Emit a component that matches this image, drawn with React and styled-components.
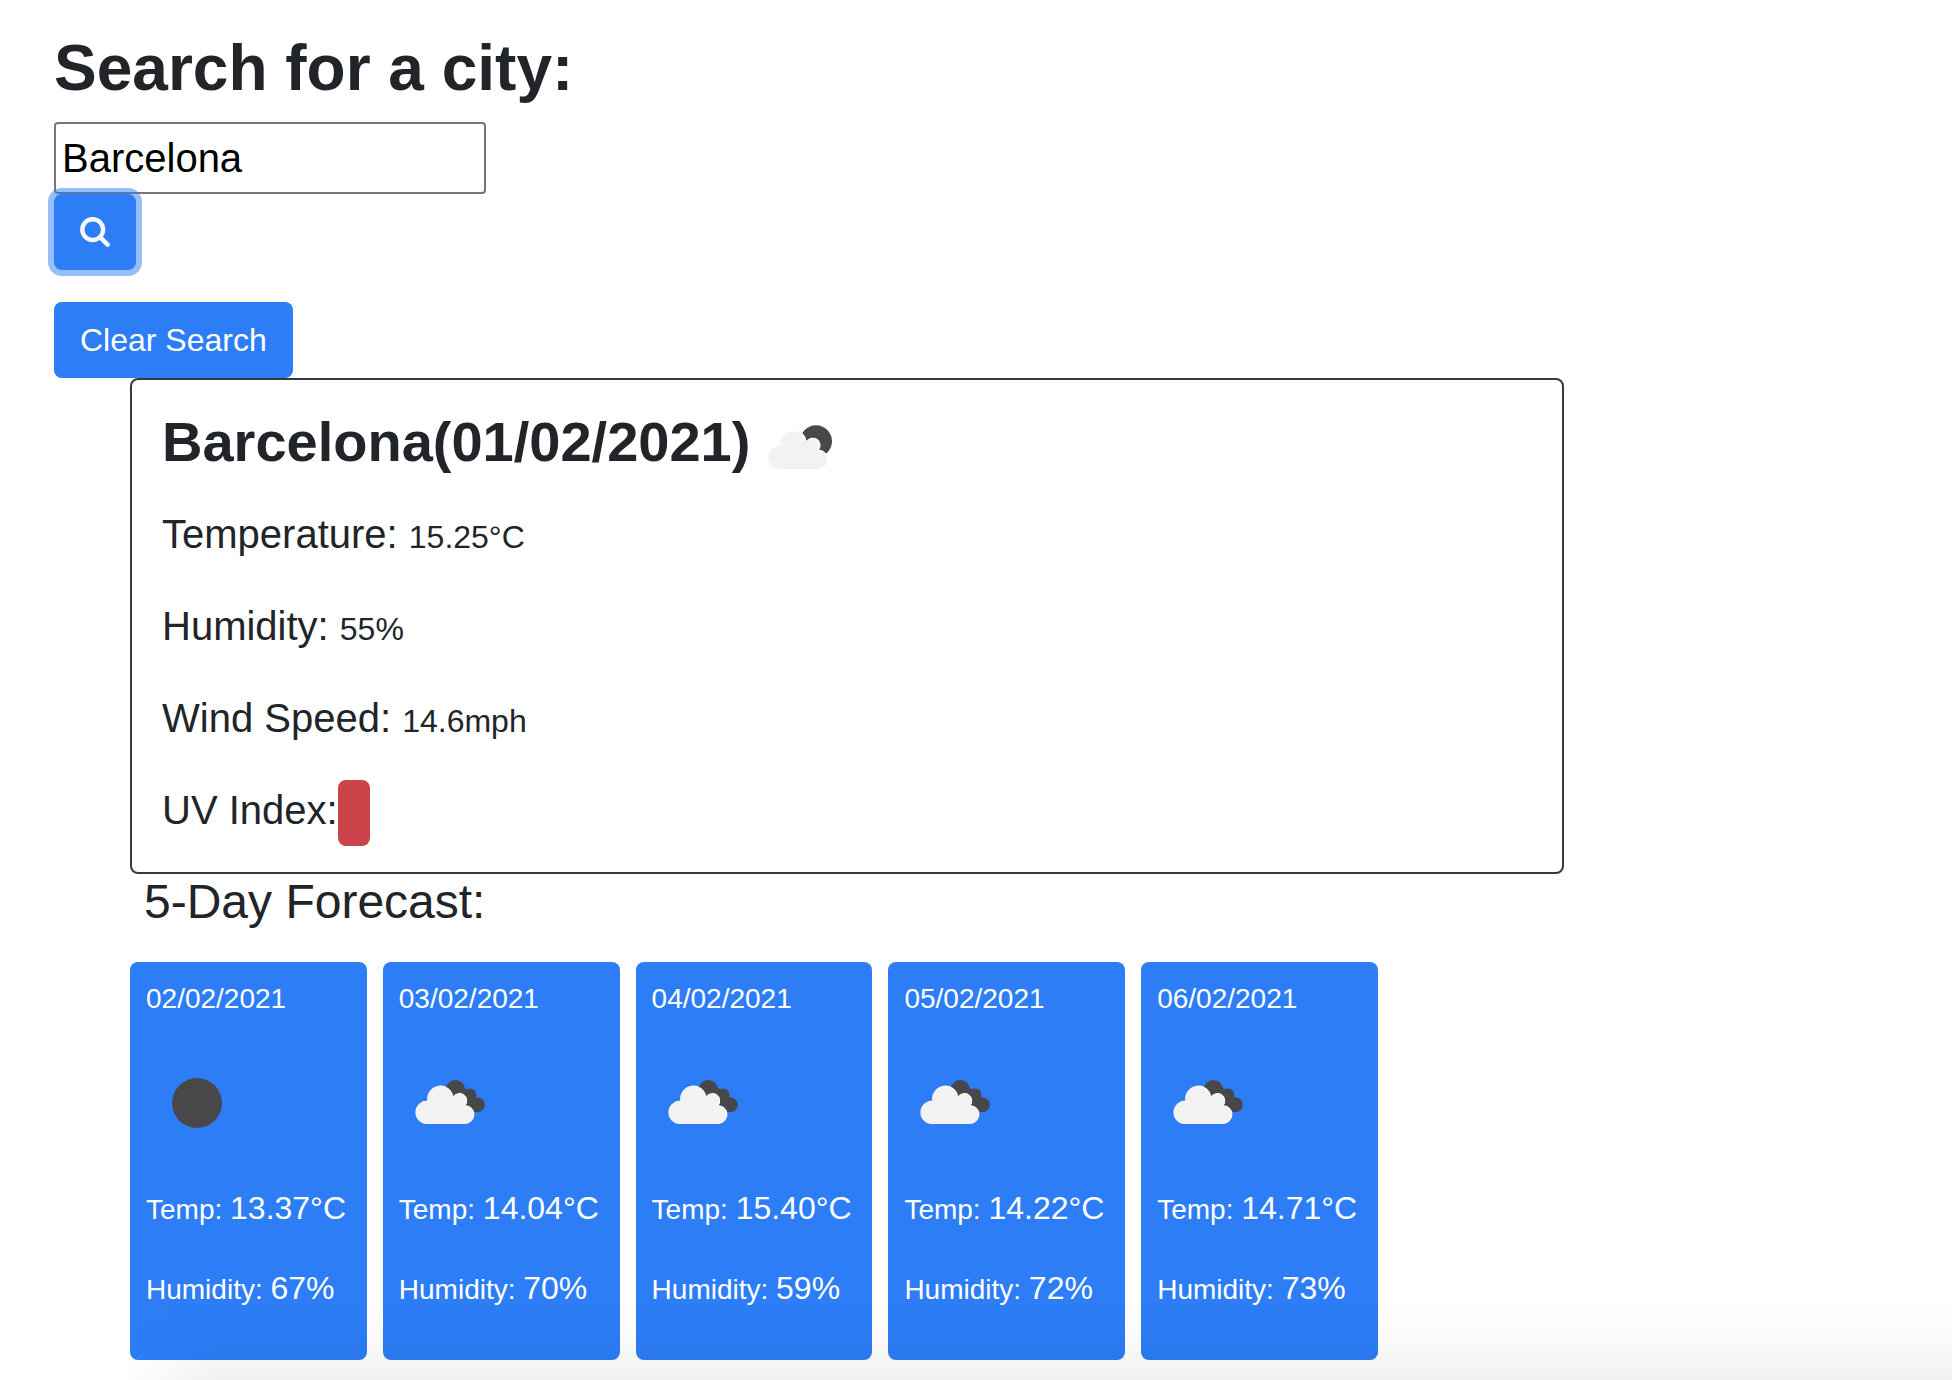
import React, { useState } from "react";
import styled, { createGlobalStyle } from "styled-components";

const GlobalStyle = createGlobalStyle`
  *, *::before, *::after { box-sizing: border-box; }
  body {
    margin: 0;
    background: #fff;
    color: #212529;
    font-family: "Liberation Sans", Arial, sans-serif;
    font-size: 32px;
    line-height: 48px;
  }
`;

const Page = styled.main`
  padding: 30px 20px 20px;
`;

const SearchForm = styled.form`
  display: flex;
  flex-direction: column;
  align-items: flex-start;
  margin-left: 34px;
`;

const SearchTitle = styled.label`
  margin-bottom: 16px;
  font-size: 64px;
  font-weight: 700;
  line-height: 76px;
`;

const CityInput = styled.input`
  width: 432px;
  max-width: 100%;
  height: 72px;
  padding: 2px 6px;
  border: 2px solid #767676;
  border-radius: 4px;
  background: #fff;
  color: #000;
  font: inherit;
  font-size: 40px;
`;

const Button = styled.button`
  display: inline-flex;
  align-items: center;
  height: 76px;
  padding: 0 26px;
  border: 0;
  border-radius: 8px;
  background: #2d7df6;
  color: #fff;
  font: inherit;
  cursor: pointer;
  box-shadow: ${(p) => (p.$active ? "0 0 0 6px rgba(45, 125, 246, 0.5)" : "none")};
`;

const ClearButton = styled(Button)`
  margin-top: 32px;
`;

const Results = styled.div`
  margin-left: 110px;
`;

const CurrentCard = styled.section`
  width: calc((100% + 110px) * 0.75);
  padding: 16px 30px 0;
  border: 2px solid #343a40;
  border-radius: 8px;
`;

const CityTitle = styled.h1`
  margin: 0 0 8px;
  font-size: 56px;
  font-weight: 700;
  line-height: 68px;
`;

const Stat = styled.div`
  display: flex;
  align-items: baseline;
  height: 60px;
  margin-bottom: 32px;
  font-size: 40px;
  line-height: 60px;
  white-space: pre;
`;

const StatValue = styled.span`
  font-size: 32px;
`;

const UvBadge = styled.span`
  align-self: flex-start;
  width: 32px;
  height: 66px;
  border-radius: 8px;
  background: #cb444a;
`;

const ForecastTitle = styled.h2`
  margin: 0 0 32px;
  padding-left: 14px;
  font-size: 48px;
  font-weight: 400;
  line-height: 56px;
`;

const Days = styled.div`
  display: grid;
  grid-template-columns: repeat(5, minmax(0, 1fr));
  gap: 16px;
  max-width: 1248px;
`;

const DayCard = styled.article`
  padding: 16px;
  border-radius: 8px;
  background: #2d7df6;
  color: #fff;
  white-space: nowrap;
`;

const DayDate = styled.h3`
  margin: 0 0 32px;
  font-size: 28px;
  font-weight: 400;
  line-height: 42px;
`;

const DayStat = styled.p`
  margin: 32px 0;
`;

const DayLabel = styled.span`
  font-size: 28px;
  line-height: 40px;
`;

const Icon = styled.svg`
  display: ${(p) => (p.$inline ? "inline-block" : "block")};
  width: 100px;
  height: 100px;
  vertical-align: middle;
`;

const BottomShade = styled.div`
  position: fixed;
  inset: auto 0 0 0;
  height: 80px;
  pointer-events: none;
  background: linear-gradient(
    to bottom,
    transparent,
    rgba(0, 0, 0, 0.012) 40%,
    rgba(0, 0, 0, 0.035) 72%,
    rgba(0, 0, 0, 0.06)
  );
  mask-image: linear-gradient(to right, transparent 120px, #000 220px);
`;

function SearchIcon() {
  return (
    <svg width="30" height="30" viewBox="0 0 30 30" fill="none" stroke="#f8f9fa" strokeLinecap="round" aria-hidden="true">
      <circle cx="12.7" cy="12.6" r="10.4" strokeWidth="4.4" />
      <path d="M20.4 20.4 L27.6 27.6" strokeWidth="4.4" />
    </svg>
  );
}

function CloudShape(props) {
  return (
    <path
      d="M27.3 70.9 A11.4 11.4 0 0 1 28.3 48.1 A12.8 12.8 0 1 1 53.6 43.9 A7.6 7.6 0 0 1 66.2 52.8 A9.1 9.1 0 0 1 67 70.9 Z"
      {...props}
    />
  );
}

function WeatherIcon({ kind, label, inline }) {
  return (
    <Icon viewBox={inline ? "-2 -2 100 100" : "0 -1 100 100"} role="img" aria-label={label} $inline={inline}>
      {kind === "clear" && <circle cx="51" cy="50" r="25" fill="#48484a" />}
      {kind === "few" && (
        <>
          <circle cx="64" cy="43.3" r="16" fill="#48484a" />
          <CloudShape fill="#fff" transform="translate(1 -1)" />
          <rect x="66" y="57" width="14" height="4" fill="#fff" />
          <CloudShape fill="#f2f2f2" />
        </>
      )}
      {kind === "broken" && (
        <>
          <g fill="#48484a">
            <circle cx="56.3" cy="36.5" r="9.6" />
            <circle cx="71" cy="41.8" r="6.4" />
            <circle cx="78.4" cy="51.7" r="7.4" />
            <path d="M48 42 L65 35 L71 37 L77 44 L80 52 L78.4 59.1 L66 59 Z" />
          </g>
          <CloudShape fill="#fff" transform="translate(0.6 -0.6)" />
          <CloudShape fill="#f2f2f2" />
        </>
      )}
    </Icon>
  );
}

const days = [
  { date: "02/02/2021", kind: "clear", label: "Clear sky", temp: "13.37", humidity: 67 },
  { date: "03/02/2021", kind: "broken", label: "Broken clouds", temp: "14.04", humidity: 70 },
  { date: "04/02/2021", kind: "broken", label: "Broken clouds", temp: "15.40", humidity: 59 },
  { date: "05/02/2021", kind: "broken", label: "Broken clouds", temp: "14.22", humidity: 72 },
  { date: "06/02/2021", kind: "broken", label: "Broken clouds", temp: "14.71", humidity: 73 },
];

export default function App() {
  const [city, setCity] = useState("Barcelona");
  return (
    <>
      <GlobalStyle />
      <Page>
        <SearchForm onSubmit={(e) => e.preventDefault()}>
          <SearchTitle htmlFor="city">Search for a city:</SearchTitle>
          <CityInput id="city" type="text" value={city} onChange={(e) => setCity(e.target.value)} />
          <Button type="submit" aria-label="Search" $active>
            <SearchIcon />
          </Button>
          <ClearButton type="button" onClick={() => setCity("")}>
            Clear Search
          </ClearButton>
        </SearchForm>
        <Results>
          <CurrentCard>
            <CityTitle>
              Barcelona(01/02/2021)
              <WeatherIcon kind="few" label="Few clouds" inline />
            </CityTitle>
            <Stat>
              Temperature: <StatValue>15.25°C</StatValue>
            </Stat>
            <Stat>
              Humidity: <StatValue>55%</StatValue>
            </Stat>
            <Stat>
              Wind Speed: <StatValue>14.6mph</StatValue>
            </Stat>
            <Stat>
              UV Index:
              <UvBadge role="img" aria-label="High" />
            </Stat>
          </CurrentCard>
          <ForecastTitle>5-Day Forecast:</ForecastTitle>
          <Days>
            {days.map((d) => (
              <DayCard key={d.date}>
                <DayDate>{d.date}</DayDate>
                <WeatherIcon kind={d.kind} label={d.label} />
                <DayStat>
                  <DayLabel>Temp: </DayLabel>
                  {d.temp}°C
                </DayStat>
                <DayStat>
                  <DayLabel>Humidity: </DayLabel>
                  {d.humidity}%
                </DayStat>
              </DayCard>
            ))}
          </Days>
        </Results>
      </Page>
      <BottomShade />
    </>
  );
}
